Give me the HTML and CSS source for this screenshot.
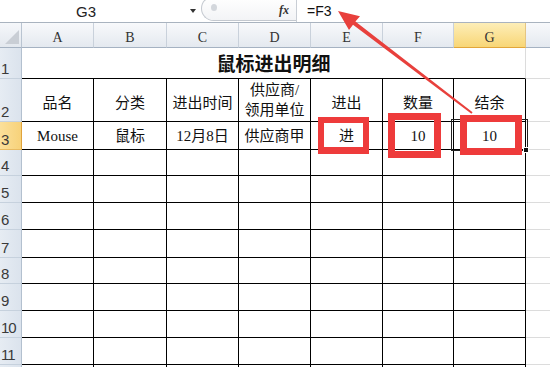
FILE: index.html
```html
<!DOCTYPE html>
<html lang="zh-CN">
<head>
<meta charset="utf-8">
<title>鼠标进出明细</title>
<link rel="stylesheet" href="styles.css">
</head>
<body>
<div class="fbar">
  <div class="namebox"><span>G3</span><span class="dd"></span></div>
  <div class="pill"><span class="knob"></span><span class="fx">fx</span></div>
  <div class="formula">=F3</div>
</div>
<div class="sheet">
  <div class="corner"><svg width="14" height="14" viewBox="0 0 14 14"><polygon points="0,14 14,14 14,0" fill="#c9ced5"/></svg></div>
  <div class="ch">A</div><div class="ch">B</div><div class="ch">C</div><div class="ch">D</div><div class="ch">E</div><div class="ch">F</div><div class="ch sel">G</div><div class="ch"></div>

  <div class="rh">1</div>
  <div class="title">鼠标进出明细</div>
  <div class="c"></div>

  <div class="rh">2</div>
  <div class="t r2">品名</div><div class="t r2">分类</div><div class="t r2">进出时间</div><div class="t two">供应商/<br>领用单位</div><div class="t r2">进出</div><div class="t r2">数量</div><div class="t r2">结余</div>
  <div class="c"></div>

  <div class="rh sel">3</div>
  <div class="t">Mouse</div><div class="t">鼠标</div><div class="t">12月8日</div><div class="t">供应商甲</div><div class="t">进</div><div class="t">10</div><div class="t">10</div>
  <div class="c"></div>

  <div class="rh">4</div>
  <div class="t"></div><div class="t"></div><div class="t"></div><div class="t"></div><div class="t"></div><div class="t"></div><div class="t"></div><div class="c"></div>
  <div class="rh">5</div>
  <div class="t"></div><div class="t"></div><div class="t"></div><div class="t"></div><div class="t"></div><div class="t"></div><div class="t"></div><div class="c"></div>
  <div class="rh">6</div>
  <div class="t"></div><div class="t"></div><div class="t"></div><div class="t"></div><div class="t"></div><div class="t"></div><div class="t"></div><div class="c"></div>
  <div class="rh">7</div>
  <div class="t"></div><div class="t"></div><div class="t"></div><div class="t"></div><div class="t"></div><div class="t"></div><div class="t"></div><div class="c"></div>
  <div class="rh">8</div>
  <div class="t"></div><div class="t"></div><div class="t"></div><div class="t"></div><div class="t"></div><div class="t"></div><div class="t"></div><div class="c"></div>
  <div class="rh">9</div>
  <div class="t"></div><div class="t"></div><div class="t"></div><div class="t"></div><div class="t"></div><div class="t"></div><div class="t"></div><div class="c"></div>
  <div class="rh">10</div>
  <div class="t"></div><div class="t"></div><div class="t"></div><div class="t"></div><div class="t"></div><div class="t"></div><div class="t"></div><div class="c"></div>
  <div class="rh">11</div>
  <div class="t"></div><div class="t"></div><div class="t"></div><div class="t"></div><div class="t"></div><div class="t"></div><div class="t"></div><div class="c"></div>
  <div class="rh"></div>
  <div class="t"></div><div class="t"></div><div class="t"></div><div class="t"></div><div class="t"></div><div class="t"></div><div class="t"></div><div class="c"></div>
</div>

<div class="selection"></div>
<div class="handle"></div>
<div class="redbox box-e"></div>
<div class="redbox box-f"></div>
<div class="redbox box-g"></div>
<svg class="arrow" width="550" height="367" viewBox="0 0 550 367">
  <polygon fill="#e8403c" points="338,11 349,30 353,24.8 471.4,113.8 472.6,112.2 355.4,21.6 360,16.2"/>
</svg>
</body>
</html>
```

FILE: styles.css
```css
* { box-sizing: border-box; margin: 0; padding: 0; }
html, body { width: 550px; height: 367px; overflow: hidden; background: #fff; }
body {
  position: relative;
  font-family: "Liberation Serif", "Noto Sans CJK SC", serif;
  color: #111;
}

/* formula bar */
.fbar {
  display: flex;
  height: 23px;
  border-bottom: 1px solid #a9b3bf;
  background: #fff;
}
.namebox {
  width: 201px;
  display: flex;
  align-items: center;
  justify-content: space-between;
  padding-left: 76px;
  padding-right: 5px;
  font: 15px/15px "Liberation Sans", sans-serif;
  color: #222;
}
.dd {
  width: 0;
  height: 0;
  border-left: 3.5px solid transparent;
  border-right: 3.5px solid transparent;
  border-top: 4px solid #333;
}
.pill {
  align-self: flex-start;
  width: 95px;
  height: 25px;
  margin-top: -4px;
  border: 1px solid #c3c8cf;
  border-right: none;
  border-radius: 13px 0 0 13px;
  display: flex;
  align-items: center;
  justify-content: space-between;
  padding: 3px 7px 0 9px;
  background: linear-gradient(#ffffff, #f3f4f6);
}
.knob {
  width: 6px;
  height: 7px;
  margin-top: -6px;
  border-radius: 50%;
  background: #d3d7dc;
}
.fx {
  font: italic bold 12px/12px "Liberation Serif", serif;
  color: #333;
}
.formula {
  flex: 1;
  display: flex;
  align-items: center;
  border-left: 1px solid #c9ced5;
  padding-left: 10px;
  font: 14px/14px "Liberation Sans", sans-serif;
  color: #111;
}

/* sheet */
.sheet {
  display: grid;
  grid-template-columns: 22px 72px 73px 72px 72px 72px 71px 72px 40px;
  grid-template-rows: 25px 31px 43px 28px 26px 27px 27px 28px 26px 27px 27px 27px 27px;
}
.corner {
  background: linear-gradient(#f5f7fa, #e3e8ee);
  border-right: 1px solid #b9c4d1;
  border-bottom: 1px solid #a5b2c2;
  display: flex;
  align-items: flex-end;
  justify-content: flex-end;
  padding: 0 2px 3px 0;
}
.corner svg { display: block; }
.ch {
  background: linear-gradient(#f8f9fb, #e4e9ef);
  border-right: 1px solid #c9d1db;
  border-bottom: 1px solid #a5b2c2;
  display: flex;
  align-items: center;
  justify-content: center;
  padding-top: 5px;
  font: 14px/14px "Liberation Serif", serif;
  color: #333;
}
.ch.sel {
  background: linear-gradient(#fdeeb8, #f8d676);
  border-right-color: #e5c582;
  border-bottom-color: #e2a63a;
}
.rh {
  background: linear-gradient(90deg, #e6ecf3, #dbe3ed);
  border-right: 1px solid #b3c0cf;
  border-bottom: 1px solid #c6d1dd;
  display: flex;
  align-items: flex-end;
  justify-content: flex-start;
  padding-left: 1px;
  padding-bottom: 2px;
  font: 15px/15px "Liberation Sans", sans-serif;
  letter-spacing: -1px;
  color: #3a3a3a;
}
.rh.sel {
  background: linear-gradient(90deg, #fbe09a, #f7d27a);
  border-right-color: #e0a33c;
  border-bottom-color: #e8bb62;
}
.c {
  border-right: 1px solid #dcdcdc;
  border-bottom: 1px solid #dcdcdc;
}
.title {
  grid-column: span 7;
  border-right: 1px solid #dcdcdc;
  border-bottom: 1px solid #000;
  display: flex;
  align-items: center;
  justify-content: center;
  font: bold 19px/22px "Noto Sans CJK SC", sans-serif;
  color: #111;
}
.t {
  border-right: 1px solid #000;
  border-bottom: 1px solid #000;
  display: flex;
  align-items: center;
  justify-content: center;
  text-align: center;
  font-size: 15px;
  line-height: 18px;
  color: #111;
}
.r2 { padding-top: 6px; }
.two { line-height: 20px; }

/* overlays */
.selection {
  position: absolute;
  left: 451px;
  top: 119px;
  width: 77px;
  height: 32px;
  border: 1px solid #222;
}
.handle {
  position: absolute;
  left: 523px;
  top: 147px;
  width: 6px;
  height: 6px;
  background: #111;
  border: 1px solid #fff;
}
.redbox {
  position: absolute;
  border: 7px solid #ee3b3b;
}
.box-e { left: 318px; top: 117px; width: 51px; height: 37px; border-width: 6px 6px 7px 6px; }
.box-f { left: 388px; top: 113px; width: 53px; height: 45px; }
.box-g { left: 460px; top: 115px; width: 62px; height: 40px; }
.arrow {
  position: absolute;
  left: 0;
  top: 0;
}
```
